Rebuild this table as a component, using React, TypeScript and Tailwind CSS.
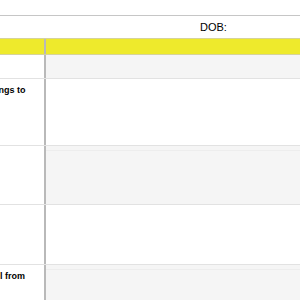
export default function App() {
  const rows = [
    { h: "h-[24px]", label: "", shade: true },
    { h: "h-[67px]", label: "Things to", shade: false },
    { h: "h-[59px]", label: "", shade: true },
    { h: "h-[60px]", label: "", shade: false },
    { h: "h-[60px]", label: "Mail from", shade: true },
  ];

  return (
    <div className="w-[300px] h-[300px] overflow-hidden bg-white font-['Liberation_Sans',Arial,sans-serif] text-black">
      <div className="h-[16px] border-b border-[#c6c6c6]" />
      <div className="h-[22px] flex items-center pl-[200px] text-[11px]">DOB:</div>
      <div className="flex -ml-[20px] w-[320px] h-[17px] bg-[#eeea2c] border-y border-[#d6d39a]">
        <div className="w-[66px] border-r-2 border-[#b9b9b9]" />
        <div className="flex-1" />
      </div>
      {rows.map((r, i) => (
        <div key={i} className={`flex -ml-[20px] w-[320px] ${r.h} border-b border-[#e2e2e2]`}>
          <div className="w-[66px] shrink-0 border-r-2 border-[#b9b9b9] bg-white pl-[5px] pt-[6px] text-[9px] font-bold leading-[11px] whitespace-nowrap">
            {r.label}
          </div>
          <div className={`flex-1 ${r.shade ? "bg-[#f5f5f5]" : "bg-white"}`}>
            {r.shade && i > 0 && <div className="mt-[4px] border-t border-[#ededed]" />}
          </div>
        </div>
      ))}
    </div>
  );
}
